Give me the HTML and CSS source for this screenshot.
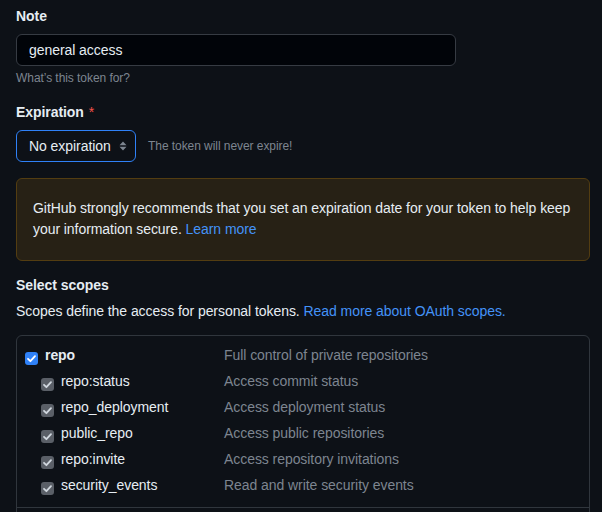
FILE: index.html
```html
<!DOCTYPE html>
<html lang="en">
<head>
<meta charset="utf-8">
<title>New personal access token</title>
<link rel="stylesheet" href="styles.css">
</head>
<body>
<div class="page">
  <div class="field">
    <label class="label" for="note">Note</label>
    <input id="note" class="text-input" type="text" value="general access">
    <p class="hint">What’s this token for?</p>
  </div>

  <div class="field expiration">
    <div class="label">Expiration <span class="required">*</span></div>
    <div class="select-row">
      <div class="select">
        <span>No expiration</span>
        <svg class="caret" width="8" height="10" viewBox="0 0 8 10"><path d="M0.5 4.2 L4 0.6 L7.5 4.2 Z M0.5 5.8 L4 9.4 L7.5 5.8 Z" fill="#7d8590"/></svg>
      </div>
      <span class="select-note">The token will never expire!</span>
    </div>
  </div>

  <div class="flash">
    GitHub strongly recommends that you set an expiration date for your token to help keep your information secure. <a href="#" class="link">Learn more</a>
  </div>

  <h3 class="section-title">Select scopes</h3>
  <p class="section-desc">Scopes define the access for personal tokens. <a href="#" class="link">Read more about OAuth scopes.</a></p>

  <div class="scopes">
    <div class="group">
      <div class="row">
        <div class="name-cell"><span class="cb cb-on"><svg width="13" height="13" viewBox="0 0 13 13"><path d="M3 6.8 L5.4 9.2 L10 4.2" fill="none" stroke="#fff" stroke-width="1.8" stroke-linecap="round" stroke-linejoin="round"/></svg></span><span class="name strong">repo</span></div>
        <div class="desc">Full control of private repositories</div>
      </div>
      <div class="row child">
        <div class="name-cell"><span class="cb cb-sub"><svg width="13" height="13" viewBox="0 0 13 13"><path d="M3 6.8 L5.4 9.2 L10 4.2" fill="none" stroke="#d0d7de" stroke-width="1.8" stroke-linecap="round" stroke-linejoin="round"/></svg></span><span class="name">repo:status</span></div>
        <div class="desc">Access commit status</div>
      </div>
      <div class="row child">
        <div class="name-cell"><span class="cb cb-sub"><svg width="13" height="13" viewBox="0 0 13 13"><path d="M3 6.8 L5.4 9.2 L10 4.2" fill="none" stroke="#d0d7de" stroke-width="1.8" stroke-linecap="round" stroke-linejoin="round"/></svg></span><span class="name">repo_deployment</span></div>
        <div class="desc">Access deployment status</div>
      </div>
      <div class="row child">
        <div class="name-cell"><span class="cb cb-sub"><svg width="13" height="13" viewBox="0 0 13 13"><path d="M3 6.8 L5.4 9.2 L10 4.2" fill="none" stroke="#d0d7de" stroke-width="1.8" stroke-linecap="round" stroke-linejoin="round"/></svg></span><span class="name">public_repo</span></div>
        <div class="desc">Access public repositories</div>
      </div>
      <div class="row child">
        <div class="name-cell"><span class="cb cb-sub"><svg width="13" height="13" viewBox="0 0 13 13"><path d="M3 6.8 L5.4 9.2 L10 4.2" fill="none" stroke="#d0d7de" stroke-width="1.8" stroke-linecap="round" stroke-linejoin="round"/></svg></span><span class="name">repo:invite</span></div>
        <div class="desc">Access repository invitations</div>
      </div>
      <div class="row child">
        <div class="name-cell"><span class="cb cb-sub"><svg width="13" height="13" viewBox="0 0 13 13"><path d="M3 6.8 L5.4 9.2 L10 4.2" fill="none" stroke="#d0d7de" stroke-width="1.8" stroke-linecap="round" stroke-linejoin="round"/></svg></span><span class="name">security_events</span></div>
        <div class="desc">Read and write security events</div>
      </div>
    </div>
    <div class="group">
      <div class="row">
        <div class="name-cell"><span class="cb cb-on"><svg width="13" height="13" viewBox="0 0 13 13"><path d="M3 6.8 L5.4 9.2 L10 4.2" fill="none" stroke="#fff" stroke-width="1.8" stroke-linecap="round" stroke-linejoin="round"/></svg></span><span class="name strong">workflow</span></div>
        <div class="desc">Update GitHub Action workflows</div>
      </div>
    </div>
  </div>
</div>
</body>
</html>
```
FILE: styles.css
```css
html, body {
  margin: 0;
  padding: 0;
  background: #0d1117;
}

body {
  font-family: "Liberation Sans", Arial, sans-serif;
  font-size: 14px;
  line-height: 21px;
  letter-spacing: -0.06px;
  color: #e6edf3;
  overflow: hidden;
}

.page {
  width: 574px;
  padding: 6px 0 0 16px;
}

.field {
  display: flex;
  flex-direction: column;
  align-items: flex-start;
}

.label {
  font-weight: bold;
  font-size: 14px;
  line-height: 21px;
  margin-bottom: 7px;
}

.required {
  color: #f85149;
  font-weight: normal;
  margin-left: 1px;
}

.text-input {
  box-sizing: border-box;
  width: 440px;
  height: 32px;
  margin: 0;
  padding: 0 12px;
  background: #010409;
  border: 1px solid #363b43;
  border-radius: 6px;
  color: #e6edf3;
  font-family: inherit;
  font-size: 14px;
  letter-spacing: -0.06px;
  outline: none;
}

.hint {
  margin: 3px 0 0;
  font-size: 12px;
  line-height: 18px;
  color: #7d8590;
}

.expiration {
  margin-top: 15px;
}

.select-row {
  display: flex;
  align-items: center;
}

.select {
  box-sizing: border-box;
  width: 120px;
  height: 32px;
  display: flex;
  align-items: center;
  justify-content: space-between;
  padding: 0 8px 0 12px;
  border: 1px solid #2f81f7;
  border-radius: 6px;
  background: #0d1117;
  color: #e6edf3;
}

.caret {
  display: block;
}

.select-note {
  margin-left: 12px;
  font-size: 12px;
  line-height: 18px;
  color: #7d8590;
}

.flash {
  margin-top: 16px;
  padding: 19px 16px 20px;
  background: #272115;
  border: 1px solid #533d11;
  border-radius: 6px;
}

.link {
  color: #4493f8;
  text-decoration: none;
}

.section-title {
  margin: 14px 0 0;
  font-size: 14px;
  line-height: 21px;
  font-weight: bold;
}

.section-desc {
  margin: 5px 0 0;
}

.scopes {
  margin-top: 13px;
  border: 1px solid #30363d;
  border-radius: 6px;
}

.group {
  padding: 6px 8px 9px;
  border-bottom: 1px solid #30363d;
}

.group:last-child {
  border-bottom: none;
}

.row {
  display: grid;
  grid-template-columns: 199px 1fr;
  line-height: 26px;
  height: 26px;
}

.name-cell {
  display: flex;
  align-items: flex-start;
}

.child .name-cell {
  padding-left: 16px;
}

.cb {
  box-sizing: border-box;
  width: 13px;
  height: 13px;
  margin-top: 10px;
  margin-right: 7px;
  border-radius: 3px;
  flex: none;
}

.cb svg {
  display: block;
}

.cb-on {
  background: #2f81f7;
}

.cb-sub {
  background: #5a5f67;
}

.name {
  color: #e6edf3;
}

.strong {
  font-weight: bold;
}

.desc {
  color: #7d8590;
}
```
